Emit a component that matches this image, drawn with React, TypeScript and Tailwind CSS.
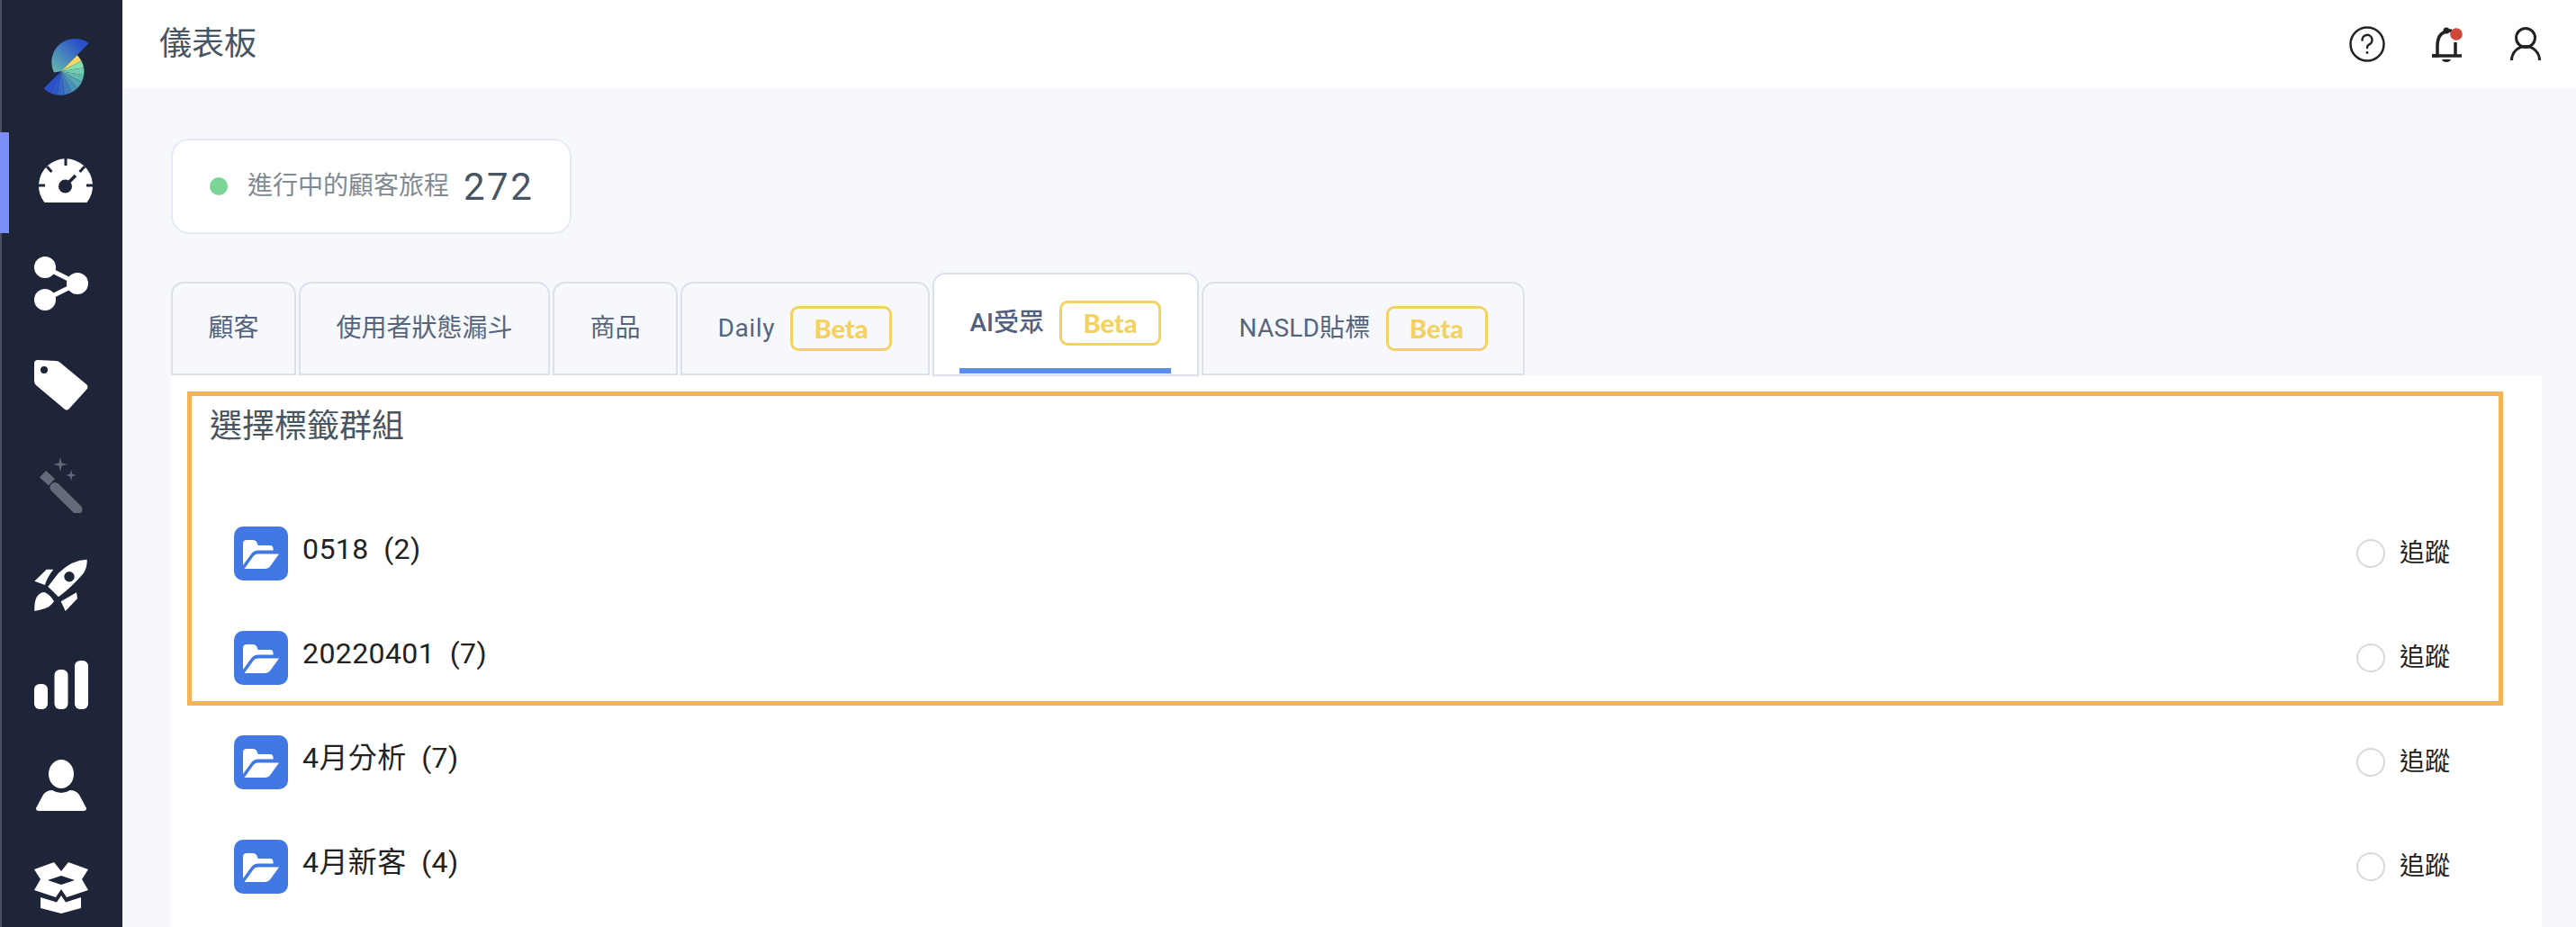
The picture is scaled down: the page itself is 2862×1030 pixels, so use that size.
const tabs = [
  { label: '顧客' },
  { label: '使用者狀態漏斗' },
  { label: '商品' },
  { label: 'Daily', labelClass: 'tracking-[0.6px]', beta: true },
  { label: 'AI受眾', beta: true, active: true },
  { label: 'NASLD貼標', labelClass: 'tracking-[0.2px]', beta: true },
];

const groups = ['0518  (2)', '20220401  (7)', '4月分析  (7)', '4月新客  (4)'];

// fan colours of the logo, clockwise from the yellow slice
const fan = ['#f2d766', '#84dfb0', '#72cdae', '#62b9ae', '#55a5b2', '#4a90b8', '#3f7bbd', '#3568c4', '#2d58ca', '#2a50cc'];

function Logo() {
  const cx = 67.7;
  const cy = 79.3;
  const step = 180 / fan.length;
  const point = (deg: number, r: number) => {
    const a = (deg * Math.PI) / 180;
    return `${cx + r * Math.cos(a)} ${cy + r * Math.sin(a)}`;
  };
  return (
    <svg viewBox="45 37 57 72" className="mt-[37px] ml-[11px] h-[72px] w-[57px]">
      <defs>
        <linearGradient id="logoTop" x1="1" y1="0" x2="0" y2="1">
          <stop offset="0.2" stopColor="#2a50c8" />
          <stop offset="1" stopColor="#68bdae" />
        </linearGradient>
      </defs>
      <path d="M98.7 48A26 26 0 0 0 60 80.5L67.7 79.3Z" fill="url(#logoTop)" />
      {fan.map((color, i) => {
        const start = -45 + i * step;
        const r = 25.5 + i * 0.15;
        return (
          <path
            key={color}
            d={`M${cx} ${cy}L${point(start, r)}A${r} ${r} 0 0 1 ${point(start + step, r)}Z`}
            fill={color}
          />
        );
      })}
    </svg>
  );
}

function Sidebar() {
  return (
    <aside className="relative flex h-full w-[136px] shrink-0 flex-col items-center border-l-2 border-[#4a4f62] bg-[#1f2539] pr-[2px] text-white">
      <div className="absolute top-[147px] left-[-2px] h-[112px] w-[10px] bg-[#7f8ffa]" />
      <Logo />
      <svg viewBox="43 176 60 50" className="mt-[67px] ml-[10px] h-[50px] w-[60px] shrink-0">
        <path d="M49.5 225A30 30 0 1 1 96.5 225Z" fill="#fff" />
        <path d="M73 176V184M52 185L57.500 191M94 185L88.500 191M43 206H50M96 206H103" stroke="#1f2539" strokeWidth="3" />
        <circle cx="72.500" cy="207" r="7.500" fill="#1f2539" />
        <path d="M73 206L84 195" stroke="#1f2539" strokeWidth="3.500" />
      </svg>
      <svg viewBox="38 285 60 60" className="mt-[59px] h-[60px] w-[60px] shrink-0">
        <path d="M50 297L86 315L50 333" fill="none" stroke="#fff" strokeWidth="5" />
        <circle cx="50" cy="297" r="12" fill="#fff" />
        <circle cx="86" cy="315" r="12" fill="#fff" />
        <circle cx="50" cy="333" r="12" fill="#fff" />
      </svg>
      <svg viewBox="38 400 60 57" className="mt-[55px] h-[57px] w-[60px] shrink-0">
        <path
          fillRule="evenodd"
          d="M38 404Q38 400 42 400L62 401Q65 401 67 403L96 427Q99 430 96 433L77 454Q74 457 71 454L40 428Q38 426 38 423ZM49 407A4 4 0 1 0 49 415A4 4 0 1 0 49 407Z"
          fill="#fff"
        />
      </svg>
      <svg viewBox="45 508 48 62" className="mt-[51px] h-[62px] w-[48px] shrink-0">
        <path d="M62 541.500L87 566" stroke="#646a77" strokeWidth="11" strokeLinecap="round" />
        <path d="M45.500 530.500L52 523.500L61.500 532L55 539Z" fill="#646a77" stroke="#646a77" strokeWidth="1" strokeLinejoin="round" />
        <path d="M68 508L69.500 514.500L76 516L69.500 517.500L68 524.500L66.500 517.500L60 516L66.500 514.500Z" fill="#646a77" />
        <path d="M80 522L81.200 526.800L86 528L81.200 529.200L80 534L78.800 529.200L74 528L78.800 526.800Z" fill="#646a77" />
      </svg>
      <svg viewBox="38 620 60 60" className="mt-[50px] h-[60px] w-[60px] shrink-0">
        <path
          fillRule="evenodd"
          d="M96.700 621.700Q80 622 65 636.700L53.300 651.700L65 663.300Q80 652 93 636.700Q97 630 96.700 621.700ZM77 635A5.700 5.700 0 1 0 77 646.400A5.700 5.700 0 1 0 77 635Z"
          fill="#fff"
        />
        <path d="M38.300 645.700L51.700 632.700L59.300 632.700Q52 642 50 650Z" fill="#fff" />
        <path d="M67.700 668.300L85 658.300L86 665L72.700 679Z" fill="#fff" />
        <path d="M38.300 679Q38 668 41 663Q46 657 50 658.300Q56 661 60 668.300Q55 675 50 676Q44 678 38.300 679Z" fill="#fff" />
      </svg>
      <svg viewBox="38 734 60 54" className="mt-[54px] h-[54px] w-[60px] shrink-0">
        <rect x="38" y="760" width="15" height="28" rx="6" fill="#fff" />
        <rect x="60.500" y="744" width="15" height="44" rx="6" fill="#fff" />
        <rect x="83" y="734" width="15" height="54" rx="6" fill="#fff" />
      </svg>
      <svg viewBox="40 844 56 57" className="mt-[56px] h-[57px] w-[56px] shrink-0">
        <ellipse cx="68" cy="860" rx="14" ry="16" fill="#fff" />
        <path d="M40 898L48 883Q52 878 58 878Q68 884 78 878Q84 878 88 883L96 898Q96 901 93 901H43Q40 901 40 898Z" fill="#fff" />
      </svg>
      <svg viewBox="38 958 60 57" className="mt-[57px] h-[57px] w-[60px] shrink-0">
        <path
          fillRule="evenodd"
          d="M38 966L60 958L68 968L76 958L98 966L91 977L98 989L74 997L68 988L62 997L38 989L45 977ZM53 978L68 973L83 978L68 983Z"
          fill="#fff"
        />
        <path d="M45 997L63 1002.500L68 995L73 1002.500L90 997V1009L68 1015L45 1009Z" fill="#fff" />
      </svg>
    </aside>
  );
}

function HeaderIcons() {
  return (
    <div className="flex items-center">
      <svg viewBox="2610 29 40 40" className="h-[40px] w-[40px]" fill="none" stroke="#222" strokeWidth="2.500">
        <circle cx="2630" cy="49" r="18.500" />
        <path d="M2624.500 44.500A5.500 5.500 0 1 1 2632 49.500Q2630 50.500 2630 53" strokeLinecap="round" />
        <circle cx="2630" cy="58.500" r="1.400" fill="#222" stroke="none" />
      </svg>
      <svg viewBox="2700 28 38 41" className="ml-[50px] h-[41px] w-[38px]">
        <path d="M2724 33Q2708 33 2708 50V61H2702" fill="none" stroke="#222" strokeWidth="3.500" />
        <path d="M2728 46V61H2735M2702 61H2735" fill="none" stroke="#222" strokeWidth="3.500" />
        <circle cx="2718" cy="33" r="3.500" fill="#222" />
        <path d="M2713 65H2723Q2722 68 2718 68Q2714 68 2713 65Z" fill="#222" />
        <circle cx="2729" cy="37" r="6.800" fill="#d0473a" />
      </svg>
      <svg viewBox="2789 30 34 38" className="ml-[51px] h-[38px] w-[34px]" fill="none" stroke="#222" strokeWidth="3">
        <circle cx="2806" cy="42" r="10.500" />
        <path d="M2790.500 67A15.500 15.500 0 0 1 2821.500 67" />
      </svg>
    </div>
  );
}

function FolderIcon() {
  return (
    <div className="flex h-[60px] w-[60px] shrink-0 items-center justify-center rounded-[10px] bg-[#4178e4]">
      <svg viewBox="0 0 60 60" className="h-[60px] w-[60px]">
        <path d="M10 19Q10 15 14 15H21Q24 15 25.500 18L26.500 21H40Q43 21 43.500 24V26.500H27Q22 26.500 19.500 30L10 43Z" fill="#fff" />
        <path d="M11.500 47L21.500 33Q23 30.500 27 30.500H50L41 43Q38.500 47 34 47Z" fill="#fff" />
      </svg>
    </div>
  );
}

function Tab({ label, labelClass, beta, active }: { label: string; labelClass?: string; beta?: boolean; active?: boolean }) {
  return (
    <div
      className={
        active
          ? 'relative z-10 mb-[-1px] flex h-[115px] items-center gap-[17px] rounded-t-[14px] border-2 border-[#dbe0ea] bg-white px-[40px] pb-[4px] text-[28px] font-medium text-[#515f80]'
          : 'flex h-[104px] items-center gap-[17px] rounded-t-[14px] border-2 border-[#dbe0ea] bg-[#f6f8fc] px-[39.5px] text-[28px] text-[#56657f]'
      }
    >
      <span className={`whitespace-nowrap ${labelClass ?? ''}`}>{label}</span>
      {beta && (
        <span className="flex h-[50px] w-[113px] shrink-0 items-center justify-center rounded-[9px] border-[3px] border-[#f4d262] font-['Lato',sans-serif] text-[29px] font-black text-[#f4d262]">
          Beta
        </span>
      )}
      {active && <div className="absolute right-[29px] bottom-[1px] left-[28px] h-[6px] bg-[#5b8df0]" />}
    </div>
  );
}

export default function App() {
  return (
    <div className="flex h-[1030px] overflow-hidden bg-[#f6f8fc] font-['Roboto','Noto_Sans_CJK_TC',sans-serif]">
      <Sidebar />
      <main className="flex min-w-0 flex-1 flex-col">
        <header className="flex h-[98px] shrink-0 items-center justify-between bg-white pr-[39px] pl-[41px]">
          <h1 className="text-[36px] text-[#475462]">儀表板</h1>
          <HeaderIcons />
        </header>
        <div className="flex min-h-0 flex-1 flex-col pt-[56px] pr-[38px] pl-[54px]">
          <div className="flex h-[106px] w-[445px] items-center rounded-[20px] border-2 border-[#e6eaf7] bg-white pl-[41px]">
            <span className="h-[20px] w-[20px] rounded-full bg-[#79d698]" />
            <span className="ml-[22px] text-[28px] text-[#7f8a94]">進行中的顧客旅程</span>
            <span className="ml-[16px] text-[42px] tracking-[2.5px] text-[#475462]">272</span>
          </div>
          <div className="mt-[53px] flex h-[104px] shrink-0 items-end gap-[3px]">
            {tabs.map((tab) => (
              <Tab key={tab.label} {...tab} />
            ))}
          </div>
          <section className="relative flex-1 bg-white pt-[32px]">
            <h2 className="pl-[43px] text-[36px] leading-[50px] text-[#475462]">選擇標籤群組</h2>
            <div className="mt-[58px]">
              {groups.map((group) => (
                <div key={group} className="flex h-[116px] items-center pr-[102px] pl-[70px]">
                  <FolderIcon />
                  <span className="mb-[10px] ml-[16px] flex-1 text-[32px] tracking-[0.4px] whitespace-pre text-[#222]">{group}</span>
                  <span className="h-[32px] w-[32px] rounded-full border-2 border-[#d9d9d9]" />
                  <span className="ml-[16px] text-[28px] text-[#222]">追蹤</span>
                </div>
              ))}
            </div>
            <div className="pointer-events-none absolute top-[18px] left-[18px] h-[349px] w-[2573px] border-[5px] border-[#f3b457]" />
          </section>
        </div>
      </main>
    </div>
  );
}
